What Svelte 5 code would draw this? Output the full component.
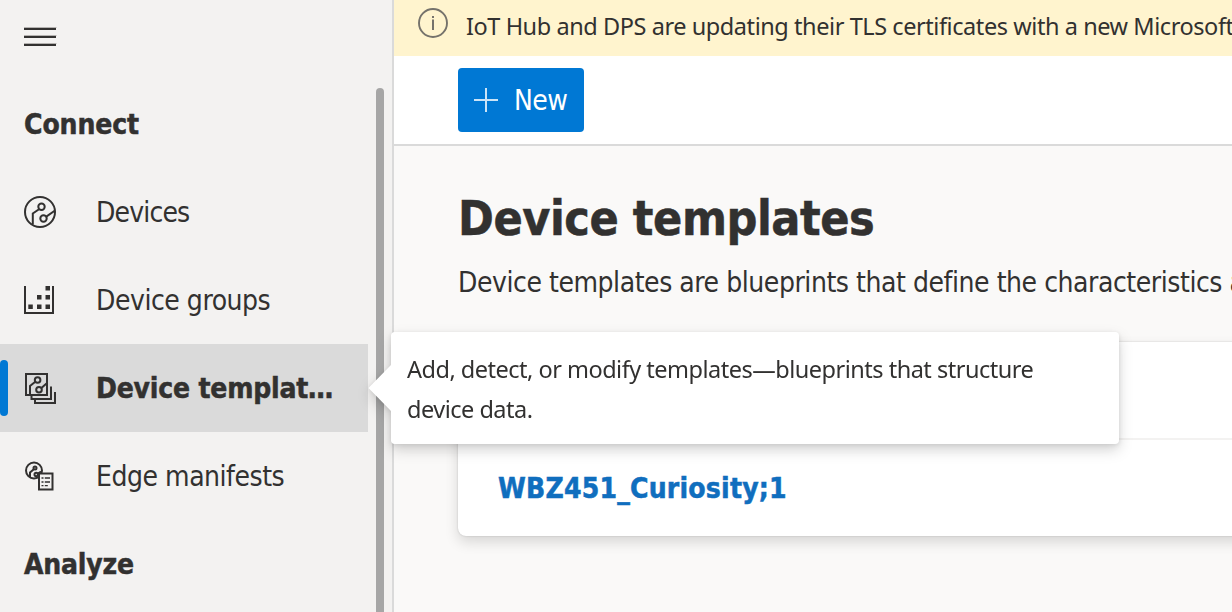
<script>
  const items = [
    { label: 'Devices', icon: 'devices' },
    { label: 'Device groups', icon: 'groups' },
    { label: 'Device templat…', icon: 'templates', active: true },
    { label: 'Edge manifests', icon: 'manifests' }
  ];
</script>

<div class="app">
  <nav class="sidebar">
    <button class="menu" aria-label="Menu">
      <svg width="34" height="20" viewBox="0 0 34 20"><path d="M-.5 .5h33M-.5 8.500h33M-.5 16.500h33" stroke="#b4b2b0" /><path d="M0 2h32M0 10h32M0 18h32" stroke="#323130" stroke-width="2" /></svg>
    </button>
    <h2><span class="t-connect">Connect</span></h2>
    {#each items as item}
      <a class="item" class:active={item.active}>
        <svg class="icon" width="34" height="34" viewBox="0 0 34 34" fill="none" stroke="#323130" stroke-width="2">
          {#if item.icon === 'devices'}
            <circle cx="16" cy="17" r="15" />
            <circle cx="17.5" cy="11.800" r="3.200" /><circle cx="19.500" cy="23.500" r="3.200" />
            <path d="M15 14.200 8.800 18.500V29.500M22.300 21.600 31 15.500" />
          {:else if item.icon === 'groups'}
            <path d="M1 3v27h28V3" />
            <g fill="#323130" stroke="none"><rect x="21.500" y="3" width="4.500" height="4.500" /><rect x="13" y="12" width="4.500" height="4.500" /><rect x="21.500" y="12" width="4.500" height="4.500" /><rect x="4.300" y="21.500" width="4.500" height="4.500" /><rect x="13" y="21.500" width="4.500" height="4.500" /><rect x="21.500" y="21.500" width="4.500" height="4.500" /></g>
          {:else if item.icon === 'templates'}
            <path d="M2 3h21v21H2zM7.500 25v3H27V15.500M11 29v3h20V21" />
            <circle cx="13.600" cy="9" r="2.800" /><circle cx="15" cy="18.700" r="2.800" />
            <path d="m11.300 10.800-5.300 4.200v9M17.400 17l5.100-4.500" />
          {:else}
            <circle cx="10" cy="11.500" r="8" />
            <circle cx="11" cy="9" r="1.500" /><circle cx="12.200" cy="15.500" r="1.700" />
            <path d="M9.500 10.500 6 13.500V18M14 14.500l3-2" />
            <path d="M15 14.500h13.500v16H15z" fill="#f3f2f1" />
            <path d="M17.500 19h2m1.300 0H26m-8.500 4h2m1.300 0H26m-8.500 3.700h2m1.300 0h3" stroke-width="1.300" />
          {/if}
        </svg>
        <span class="t-{item.icon}">{item.label}</span>
      </a>
    {/each}
    <h2><span class="t-analyze">Analyze</span></h2>
    <div class="scrollbar"></div>
    <div class="tooltip" role="tooltip">
      <svg class="beak" width="24" height="46" viewBox="0 0 24 46"><path d="M24 0 1.500 23 24 46z" fill="#fff" /></svg>
      <p>Add, detect, or modify templates—blueprints that structure<br />device data.</p>
    </div>
  </nav>

  <main>
    <div class="banner">
      <svg width="30" height="30" viewBox="0 0 30 30" fill="none"><circle cx="15" cy="15" r="14" stroke="#75726b" stroke-width="1.900" /><path d="M15 11.500v10.500M15 8v2" stroke="#75726b" stroke-width="2" /></svg>
      <span>IoT Hub and DPS are updating their TLS certificates with a new Microsoft</span>
    </div>
    <div class="commands">
      <button class="new">
        <svg width="24" height="24" viewBox="0 0 24 24"><path d="M12 0v24M0 12h24" stroke="#cce4f7" stroke-width="2" /></svg>
        <span class="t-new">New</span>
      </button>
    </div>
    <section>
      <h1>Device templates</h1>
      <p class="description">Device templates are blueprints that define the characteristics and</p>
      <div class="card">
        <div class="card-head"></div>
        <div class="card-row"><a><span class="t-wbz">WBZ451_Curiosity;1</span></a></div>
      </div>
    </section>
  </main>
</div>

<style>
  :global(body) { margin: 0; }
  .app { display: flex; width: 1232px; height: 612px; overflow: hidden; color: #323130; font-family: "DejaVu Sans Condensed", "DejaVu Sans", sans-serif; font-size: 28px; }
  .app * { box-sizing: border-box; }
  span { white-space: nowrap; }
  button { border: 0; font: inherit; cursor: pointer; }
  .sidebar { position: relative; flex: 0 0 394px; height: 612px; background: #f3f2f1; border-right: 2px solid #dadada; }
  .menu { display: flex; width: 80px; height: 80px; padding: 27px 24px; background: transparent; }
  .menu svg { flex: none; }
  h2 { display: flex; align-items: center; height: 88px; margin: 0; padding-left: 24px; font-size: 28px; font-weight: 700; }
  h2, h1, .item.active span, .card-row { -webkit-text-stroke: .5px currentColor; }
  .item { position: relative; display: flex; align-items: center; gap: 38px; width: 368px; height: 88px; padding-left: 24px; }
  .icon { flex: none; }
  .item.active { background: #dadada; font-weight: 700; }
  .item.active::before { content: ""; position: absolute; left: 0; top: 16px; width: 8px; height: 56px; border-radius: 4px; background: #0078d4; }
  .t-connect { letter-spacing: -.1px; }
  .t-devices { letter-spacing: -.85px; }
  .t-groups, .t-manifests { letter-spacing: -.47px; }
  .t-templates { letter-spacing: -.2px; }
  .t-analyze { letter-spacing: -.2px; }
  .t-new { letter-spacing: -.5px; }
  .t-wbz { letter-spacing: .22px; }
  .scrollbar { position: absolute; top: 88px; right: 8px; width: 8px; height: 560px; border-radius: 4px; background: #a6a6a6; }
  .tooltip { position: absolute; z-index: 2; left: 391px; top: 332px; width: 728px; height: 112px; padding: 17px 16px; background: #fff; border-radius: 4px; filter: drop-shadow(0 6px 7px rgb(0 0 0 / .16)) drop-shadow(0 1px 2px rgb(0 0 0 / .1)); font-family: "Noto Sans", sans-serif; font-size: 23.5px; letter-spacing: -.5px; line-height: 40px; }
  .tooltip p { margin: 0; }
  .beak { position: absolute; left: -24px; top: 33px; }
  main { flex: 1; min-width: 0; height: 612px; background: #faf9f8; overflow: hidden; }
  .banner { display: flex; height: 56px; padding: 8px 0 0 24px; gap: 18px; background: #fff4ce; font-family: "Noto Sans", sans-serif; font-size: 23.5px; letter-spacing: -.43px; line-height: 36px; }
  .banner svg { flex: none; }
  .commands { height: 90px; padding: 12px 0 0 64px; background: #fff; border-bottom: 2px solid #dadada; }
  .new { display: flex; align-items: center; gap: 16px; width: 126px; height: 64px; padding: 0 16px; border-radius: 4px; background: #0078d4; color: #fff; }
  .new svg { flex: none; }
  section { padding: 40px 0 0 64px; }
  h1 { margin: 0; height: 64px; font-size: 48px; line-height: 64px; font-weight: 700; letter-spacing: -.45px; }
  .description { margin: 13px 0 39px; height: 40px; line-height: 40px; white-space: nowrap; letter-spacing: -.45px; }
  .card { width: 900px; height: 194px; border-radius: 8px; background: #fff; box-shadow: 0 0 2px rgb(0 0 0 / .18), 0 6px 14px rgb(0 0 0 / .14); }
  .card-head { height: 98px; border-bottom: 2px solid #f3f2f1; }
  .card-row { display: flex; align-items: center; height: 96px; padding-left: 40px; color: #106ebe; font-weight: 700; }
</style>
